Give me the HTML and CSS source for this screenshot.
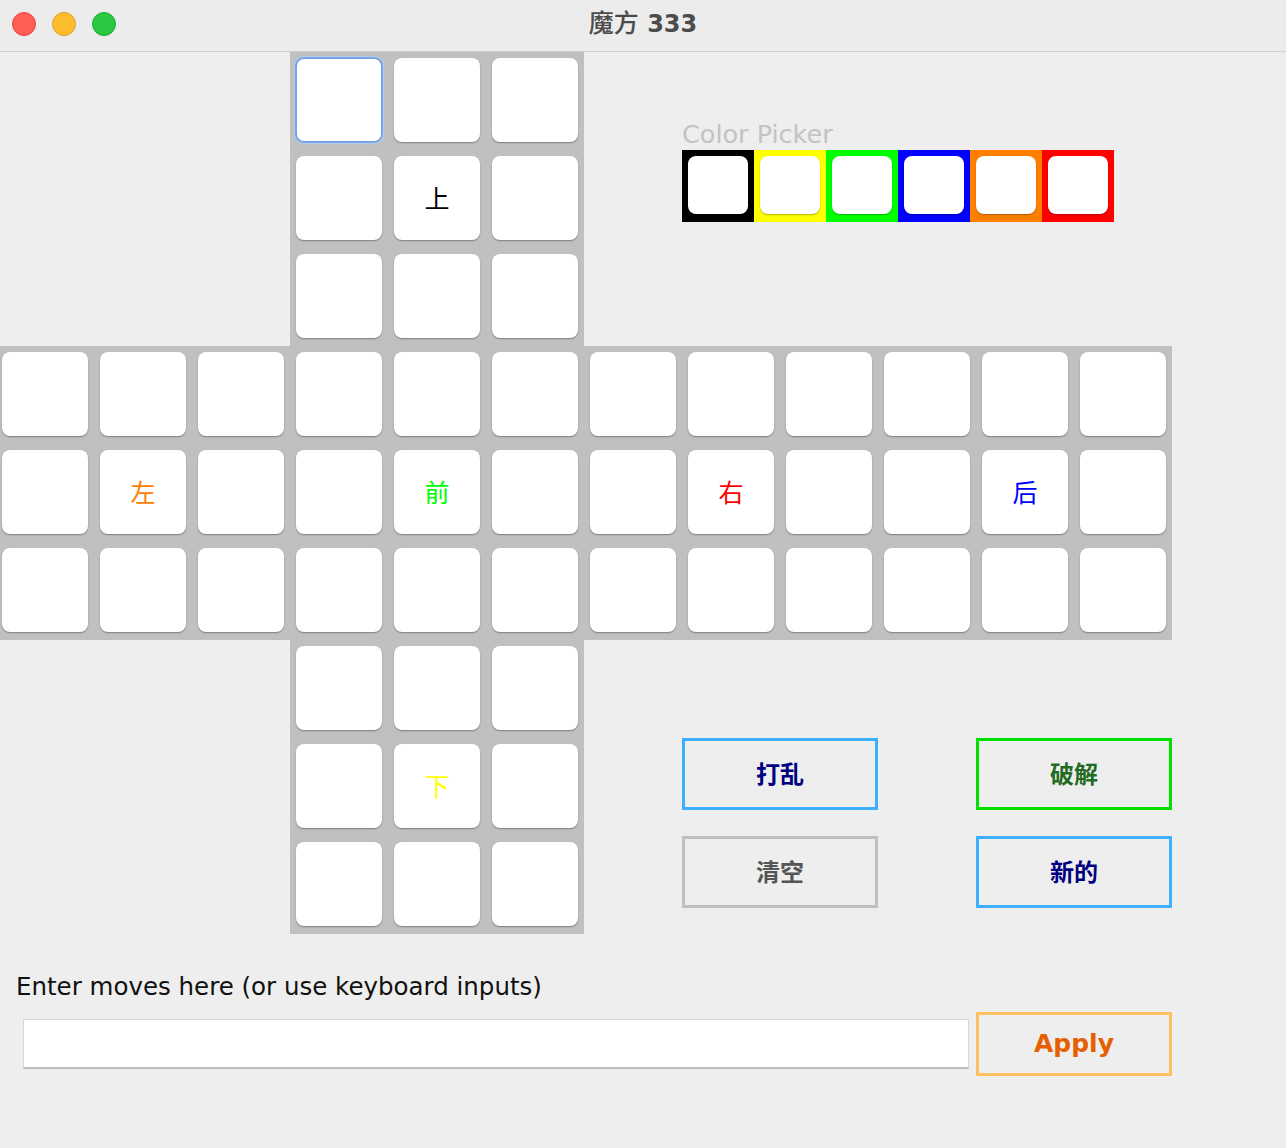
FILE: index.html
```html
<!DOCTYPE html>
<html lang="zh">
<head>
<meta charset="utf-8">
<title>魔方 333</title>
<link rel="stylesheet" href="styles.css">
</head>
<body>
<div class="window">
  <header class="titlebar">
    <div class="lights">
      <span class="light red"></span>
      <span class="light yellow"></span>
      <span class="light green"></span>
    </div>
    <div class="title"><span class="title-cjk">魔方</span> 333</div>
  </header>

  <main class="board">
    <div class="face face-top">
      <div class="cell focus"></div><div class="cell"></div><div class="cell"></div>
      <div class="cell"></div><div class="cell lbl-up">上</div><div class="cell"></div>
      <div class="cell"></div><div class="cell"></div><div class="cell"></div>
    </div>

    <div class="picker-label">Color Picker</div>
    <div class="swatches">
      <div class="swatch sw-black"><span></span></div>
      <div class="swatch sw-yellow"><span></span></div>
      <div class="swatch sw-green"><span></span></div>
      <div class="swatch sw-blue"><span></span></div>
      <div class="swatch sw-orange"><span></span></div>
      <div class="swatch sw-red"><span></span></div>
    </div>

    <div class="face band">
      <div class="cell"></div><div class="cell"></div><div class="cell"></div>
      <div class="cell"></div><div class="cell"></div><div class="cell"></div>
      <div class="cell"></div><div class="cell"></div><div class="cell"></div>
      <div class="cell"></div><div class="cell"></div><div class="cell"></div>

      <div class="cell"></div><div class="cell lbl-left">左</div><div class="cell"></div>
      <div class="cell"></div><div class="cell lbl-front">前</div><div class="cell"></div>
      <div class="cell"></div><div class="cell lbl-right">右</div><div class="cell"></div>
      <div class="cell"></div><div class="cell lbl-back">后</div><div class="cell"></div>

      <div class="cell"></div><div class="cell"></div><div class="cell"></div>
      <div class="cell"></div><div class="cell"></div><div class="cell"></div>
      <div class="cell"></div><div class="cell"></div><div class="cell"></div>
      <div class="cell"></div><div class="cell"></div><div class="cell"></div>
    </div>

    <div class="face face-bottom">
      <div class="cell"></div><div class="cell"></div><div class="cell"></div>
      <div class="cell"></div><div class="cell lbl-down">下</div><div class="cell"></div>
      <div class="cell"></div><div class="cell"></div><div class="cell"></div>
    </div>

    <button class="btn btn-scramble">打乱</button>
    <button class="btn btn-solve">破解</button>
    <button class="btn btn-clear">清空</button>
    <button class="btn btn-new">新的</button>
  </main>

  <section class="moves">
    <div class="moves-label">Enter moves here (or use keyboard inputs)</div>
    <div class="moves-row">
      <input class="moves-input" type="text">
      <button class="btn-apply">Apply</button>
    </div>
  </section>
</div>
</body>
</html>
```

FILE: styles.css
```css
* { box-sizing: border-box; }

html, body {
  margin: 0;
  padding: 0;
  background: #eeeeee;
}

body {
  width: 1286px;
  height: 1148px;
  overflow: hidden;
  font-family: "DejaVu Sans", "Noto Sans CJK SC", sans-serif;
}

.titlebar {
  position: relative;
  height: 52px;
  background: #ececec;
  border-bottom: 1px solid #cfcfcf;
  display: flex;
  align-items: center;
  justify-content: center;
}

.lights {
  position: absolute;
  left: 12px;
  top: 12px;
  display: flex;
  gap: 16px;
}

.light {
  width: 24px;
  height: 24px;
  border-radius: 50%;
  display: block;
}
.light.red { background: #ff5f57; border: 1px solid #e2463f; }
.light.yellow { background: #febc2e; border: 1px solid #dfa124; }
.light.green { background: #28c840; border: 1px solid #1eaa32; }

.title {
  font-family: "DejaVu Sans", "Noto Sans CJK SC", sans-serif;
  font-weight: bold;
  font-size: 24px;
  color: #4b4b4b;
  margin-top: -9px;
}
.title-cjk {
  font-family: "Noto Sans CJK SC", sans-serif;
  font-weight: 500;
  font-size: 25px;
}

.board {
  display: grid;
  grid-template-columns: repeat(12, 98px);
  grid-template-rows: repeat(9, 98px);
  margin-left: -4px;
}

.face {
  background: #c0c0c0;
  display: grid;
  grid-template-columns: repeat(3, 98px);
  grid-template-rows: repeat(3, 98px);
}
.face-top { grid-column: 4 / 7; grid-row: 1 / 4; }
.band { grid-column: 1 / 13; grid-row: 4 / 7; grid-template-columns: repeat(12, 98px); }
.face-bottom { grid-column: 4 / 7; grid-row: 7 / 10; }

.cell {
  margin: 6px 6px 8px 6px;
  background: #ffffff;
  border-radius: 8px;
  box-shadow: 0 1px 1.5px rgba(0, 0, 0, 0.35);
  display: flex;
  align-items: center;
  justify-content: center;
  font-family: "Noto Sans CJK SC", sans-serif;
  font-size: 25px;
  font-weight: 400;
  padding-bottom: 2px;
}

.cell.focus {
  margin: 5px 5px 7px 5px;
  border: 2px solid #74a4e4;
  border-radius: 9px;
  box-shadow: 0 0 1px 1px #b3cdf0;
}

.lbl-up { color: #000000; }
.lbl-left { color: #ff8000; }
.lbl-front { color: #00ff00; }
.lbl-right { color: #ff0000; }
.lbl-back { color: #0000ff; }
.lbl-down { color: #ffff00; }

.picker-label {
  grid-column: 8 / 13;
  grid-row: 1;
  align-self: end;
  font-size: 25.5px;
  color: #c3c3c3;
  line-height: 30px;
  margin-bottom: 1px;
}

.swatches {
  grid-column: 8 / 13;
  grid-row: 2;
  align-self: start;
  display: flex;
}

.swatch {
  width: 72px;
  height: 72px;
  padding: 6px 6px 8px 6px;
}
.swatch span {
  display: block;
  width: 100%;
  height: 100%;
  background: #ffffff;
  border-radius: 8px;
  box-shadow: 0 1px 1.5px rgba(0, 0, 0, 0.3);
}
.sw-black { background: #000000; }
.sw-yellow { background: #ffff00; }
.sw-green { background: #00ff00; }
.sw-blue { background: #0000ff; }
.sw-orange { background: #ff8000; }
.sw-red { background: #ff0000; }

.btn {
  align-self: start;
  width: 196px;
  height: 72px;
  background: #eeeeee;
  border: 3px solid #3cb0ff;
  font-family: "Noto Sans CJK SC", sans-serif;
  font-weight: bold;
  font-size: 24px;
  padding: 0 0 4px 0;
  color: #000080;
}
.btn-scramble { grid-column: 8 / 10; grid-row: 8; }
.btn-solve { grid-column: 11 / 13; grid-row: 8; border-color: #00e000; color: #226b22; }
.btn-clear { grid-column: 8 / 10; grid-row: 9; border-color: #c0c0c0; color: #555555; }
.btn-new { grid-column: 11 / 13; grid-row: 9; }

.moves {
  margin-top: 39px;
}

.moves-label {
  padding-left: 16px;
  font-size: 24.5px;
  color: #111111;
  line-height: 28px;
}

.moves-row {
  margin-top: 11px;
  display: flex;
  align-items: center;
  padding-left: 23px;
  gap: 7px;
}

.moves-input {
  width: 946px;
  height: 50px;
  background: #ffffff;
  border: 1px solid #d6d6d6;
  border-bottom: 2px solid #bdbdbd;
  outline: none;
  margin: 0;
}

.btn-apply {
  width: 196px;
  height: 64px;
  background: #eeeeee;
  border: 3px solid #ffc060;
  font-family: "DejaVu Sans", sans-serif;
  font-weight: bold;
  font-size: 25px;
  color: #e65f00;
  padding: 0 0 2px 0;
}
```
